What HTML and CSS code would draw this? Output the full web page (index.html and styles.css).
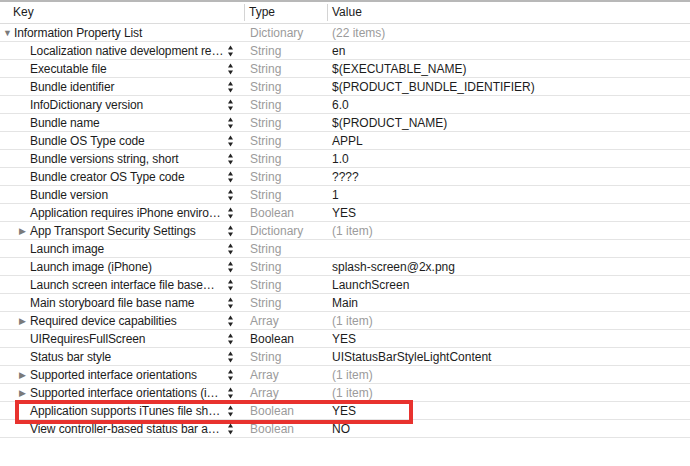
FILE: index.html
```html
<!DOCTYPE html>
<html lang="en">
<head>
    <meta charset="UTF-8">
    <title>Info.plist</title>
    <link rel="stylesheet" href="styles.css">
</head>
<body>
    <div class="topbar"></div>
    <div class="plist">
        <div class="head">
            <div class="col key">Key</div>
            <div class="col type">Type</div>
            <div class="col value">Value</div>
        </div>
        <div id="rows"></div>
    </div>

    <script>
        const items = [
            { key: "Information Property List", type: "Dictionary", value: "(22 items)", open: true, dim: true, root: true },
            { key: "Localization native development re…", type: "String", value: "en" },
            { key: "Executable file", type: "String", value: "$(EXECUTABLE_NAME)" },
            { key: "Bundle identifier", type: "String", value: "$(PRODUCT_BUNDLE_IDENTIFIER)" },
            { key: "InfoDictionary version", type: "String", value: "6.0" },
            { key: "Bundle name", type: "String", value: "$(PRODUCT_NAME)" },
            { key: "Bundle OS Type code", type: "String", value: "APPL" },
            { key: "Bundle versions string, short", type: "String", value: "1.0" },
            { key: "Bundle creator OS Type code", type: "String", value: "????" },
            { key: "Bundle version", type: "String", value: "1" },
            { key: "Application requires iPhone enviro…", type: "Boolean", value: "YES" },
            { key: "App Transport Security Settings", type: "Dictionary", value: "(1 item)", closed: true, dim: true },
            { key: "Launch image", type: "String", value: "" },
            { key: "Launch image (iPhone)", type: "String", value: "splash-screen@2x.png" },
            { key: "Launch screen interface file base…", type: "String", value: "LaunchScreen" },
            { key: "Main storyboard file base name", type: "String", value: "Main" },
            { key: "Required device capabilities", type: "Array", value: "(1 item)", closed: true, dim: true },
            { key: "UIRequiresFullScreen", type: "Boolean", value: "YES", active: true },
            { key: "Status bar style", type: "String", value: "UIStatusBarStyleLightContent" },
            { key: "Supported interface orientations", type: "Array", value: "(1 item)", closed: true, dim: true },
            { key: "Supported interface orientations (i…", type: "Array", value: "(1 item)", closed: true, dim: true },
            { key: "Application supports iTunes file sh…", type: "Boolean", value: "YES", marked: true },
            { key: "View controller-based status bar a…", type: "Boolean", value: "NO" }
        ];

        const stepper = `<svg class="stepper" width="7" height="14" viewBox="0 0 7 14">
            <path d="M3.5 1.5 L6 5.5 L1 5.5 Z" fill="#222"/>
            <path d="M1 8.5 L6 8.5 L3.5 12.5 Z" fill="#222"/>
        </svg>`;

        function rowHTML(item) {
            let arrow = "";
            if (item.open) arrow = `<span class="disc">&#9660;</span>`;
            if (item.closed) arrow = `<span class="disc">&#9654;</span>`;
            return `
                <div class="row${item.root ? " root" : ""}${item.marked ? " marked" : ""}">
                    <div class="col key">
                        ${arrow}<span class="name">${item.key}</span>
                        ${item.root ? "" : stepper}
                    </div>
                    <div class="col type${item.active ? "" : " muted"}">${item.type}</div>
                    <div class="col value${item.dim ? " muted" : ""}">${item.value}</div>
                </div>
            `;
        }

        document.getElementById("rows").innerHTML = items.map(rowHTML).join("");
    </script>
</body>
</html>
```

FILE: styles.css
```css
body {
    margin: 0;
    background: #fff;
    font-family: "Helvetica Neue", "Liberation Sans", Arial, sans-serif;
    font-size: 12px;
    color: #1c1c1c;
}

.topbar {
    height: 2px;
    background-color: #b8b8b8;
}

.head,
.row {
    display: grid;
    grid-template-columns: 244px 83px 1fr;
    box-sizing: border-box;
    border-bottom: 1px solid #dcdcdc;
}

.head {
    height: 22px;
    line-height: 21px;
}

.head .col {
    padding-left: 13px;
}

.head .type,
.head .value {
    border-left: 1px solid #d4d4d4;
    padding-left: 4px;
    margin: 2px 0;
    line-height: 17px;
}

.row {
    position: relative;
    height: 18px;
    line-height: 18px;
    border-bottom-color: #e4e4e4;
}

.row .key {
    display: flex;
    align-items: center;
    padding-left: 30px;
    min-width: 0;
}

.row.root .key {
    padding-left: 14px;
}

.name {
    flex: 1;
    white-space: nowrap;
    letter-spacing: -0.1px;
}

.disc {
    width: 0;
    position: relative;
    left: -11px;
    color: #7a7a7a;
    font-size: 9px;
}

.stepper {
    flex: none;
    margin: 0 10px 0 4px;
}

.row .type {
    padding-left: 6px;
}

.row .value {
    padding-left: 5px;
    white-space: nowrap;
}

.muted {
    color: #9b9b9b;
}

.marked::after {
    content: "";
    position: absolute;
    left: 15px;
    top: -2px;
    width: 390px;
    height: 16px;
    border: 4px solid #e8322e;
}
```
